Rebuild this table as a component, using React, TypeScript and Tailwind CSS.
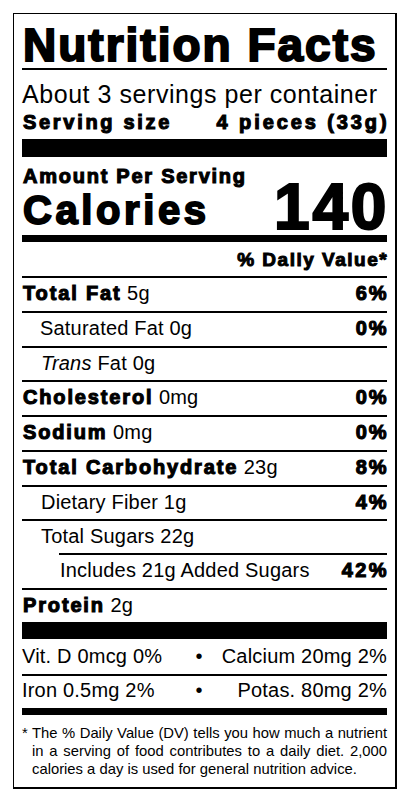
import React from "react";

const H = "font-bold tracking-[1.85px] [-webkit-text-stroke:1.1px_#000]";
const R = "tracking-[0.2px]";

function Row({
  h,
  className = "",
  children,
}: {
  h: string;
  className?: string;
  children: React.ReactNode;
}) {
  return (
    <div className={`${h} ${className} border-t-2 border-black pt-[4px] flex justify-between text-[20px] leading-[22px]`}>
      {children}
    </div>
  );
}

export default function App() {
  return (
    <div className="min-h-[802px] w-[410px] bg-white pt-[13px] pl-[13px] font-['Liberation_Sans',Arial,sans-serif] text-black">
      <div className="w-[384px] h-[776px] border-l border-t border-r-2 border-b-2 border-black px-[8px] pt-[8px]">
        <h1 className="text-[46px] leading-[46px] font-bold tracking-[2px] [-webkit-text-stroke:2px_#000] whitespace-nowrap pl-[1px]">
          Nutrition Facts
        </h1>
        <div className="h-[2px] bg-black" />
        <div className="mt-[10px] text-[25px] leading-[28px] tracking-[0.55px] whitespace-nowrap">
          About 3 servings per container
        </div>
        <div className="flex justify-between text-[20px] leading-[28px] whitespace-nowrap pl-[1px]">
          <span className="font-bold tracking-[2.7px] [-webkit-text-stroke:1.1px_#000]">Serving size</span>
          <span className="font-bold tracking-[2.9px] mr-[-2.5px] [-webkit-text-stroke:1.1px_#000]">4 pieces (33g)</span>
        </div>
        <div className="mt-[3px] h-[18px] bg-black" />
        <div className="flex justify-between items-end">
          <div className="pl-[1px]">
            <div className="mt-[8px] text-[20px] leading-[22px] font-bold tracking-[1.75px] [-webkit-text-stroke:1.1px_#000] whitespace-nowrap">
              Amount Per Serving
            </div>
            <div className="text-[40px] leading-[46px] font-bold tracking-[3.6px] [-webkit-text-stroke:1.8px_#000]">
              Calories
            </div>
          </div>
          <div className="text-[64px] leading-[52px] font-bold tracking-[2.8px] mr-[-2.2px] [-webkit-text-stroke:2.2px_#000]">
            140
          </div>
        </div>
        <div className="mt-[2px] h-[7px] bg-black" />
        <div className="h-[34px] pt-[7px] text-right text-[19px] leading-[22px] font-bold tracking-[1.5px] mr-[-1.1px] [-webkit-text-stroke:1px_#000]">
          % Daily Value*
        </div>

        <Row h="h-[35px]" className="pl-[1px]">
          <span>
            <b className={H}>Total Fat</b> <span className={R}>5g</span>
          </span>
          <b className={H + " mr-[-1.4px]"}>6%</b>
        </Row>
        <Row h="h-[35px]" className="pl-[18px]">
          <span className={R}>Saturated Fat 0g</span>
          <b className={H + " mr-[-1.4px]"}>0%</b>
        </Row>
        <Row h="h-[34px]" className="pl-[19px]">
          <span className={R}>
            <i>Trans</i> Fat 0g
          </span>
        </Row>
        <Row h="h-[35px]" className="pl-[1px]">
          <span>
            <b className={H}>Cholesterol</b> <span className={R}>0mg</span>
          </span>
          <b className={H + " mr-[-1.4px]"}>0%</b>
        </Row>
        <Row h="h-[35px]" className="pl-[1px]">
          <span>
            <b className={H}>Sodium</b> <span className={R}>0mg</span>
          </span>
          <b className={H + " mr-[-1.4px]"}>0%</b>
        </Row>
        <Row h="h-[35px]" className="pl-[1px]">
          <span>
            <b className={H}>Total Carbohydrate</b> <span className={R}>23g</span>
          </span>
          <b className={H + " mr-[-1.4px]"}>8%</b>
        </Row>
        <Row h="h-[34px]" className="pl-[19px]">
          <span className={R}>Dietary Fiber 1g</span>
          <b className={H + " mr-[-1.4px]"}>4%</b>
        </Row>
        <Row h="h-[34px]" className="pl-[19px]">
          <span className={R}>Total Sugars 22g</span>
        </Row>
        <Row h="h-[35px]" className="ml-[37px]">
          <span className={R + " pl-[1px]"}>Includes 21g Added Sugars</span>
          <b className={H + " tracking-[2.4px] mr-[-2px]"}>42%</b>
        </Row>
        <Row h="h-[34px]" className="pl-[1px]">
          <span>
            <b className={H}>Protein</b> <span className={R}>2g</span>
          </span>
        </Row>
        <div className="h-[17px] bg-black" />
        <div className="h-[35px] pt-[6px] flex text-[20px] leading-[22px] tracking-[0.2px] whitespace-nowrap">
          <span className="flex-1">Vit. D 0mcg 0%</span>
          <span className="w-[20px] text-center">•</span>
          <span className="w-[178px] text-right">Calcium 20mg 2%</span>
        </div>
        <div className="h-[34px] border-t-2 border-black pt-[3px] flex text-[20px] leading-[22px] tracking-[0.2px] whitespace-nowrap">
          <span className="flex-1">Iron 0.5mg 2%</span>
          <span className="w-[20px] text-center">•</span>
          <span className="w-[178px] text-right">Potas. 80mg 2%</span>
        </div>
        <div className="h-[7px] bg-black" />
        <p className="pt-[9px] pl-[10px] -indent-[10px] text-[14.8px] leading-[18px] text-justify">
          * The % Daily Value (DV) tells you how much a nutrient in a serving of food contributes to a daily diet. 2,000 calories a day is used for general nutrition advice.
        </p>
      </div>
    </div>
  );
}
